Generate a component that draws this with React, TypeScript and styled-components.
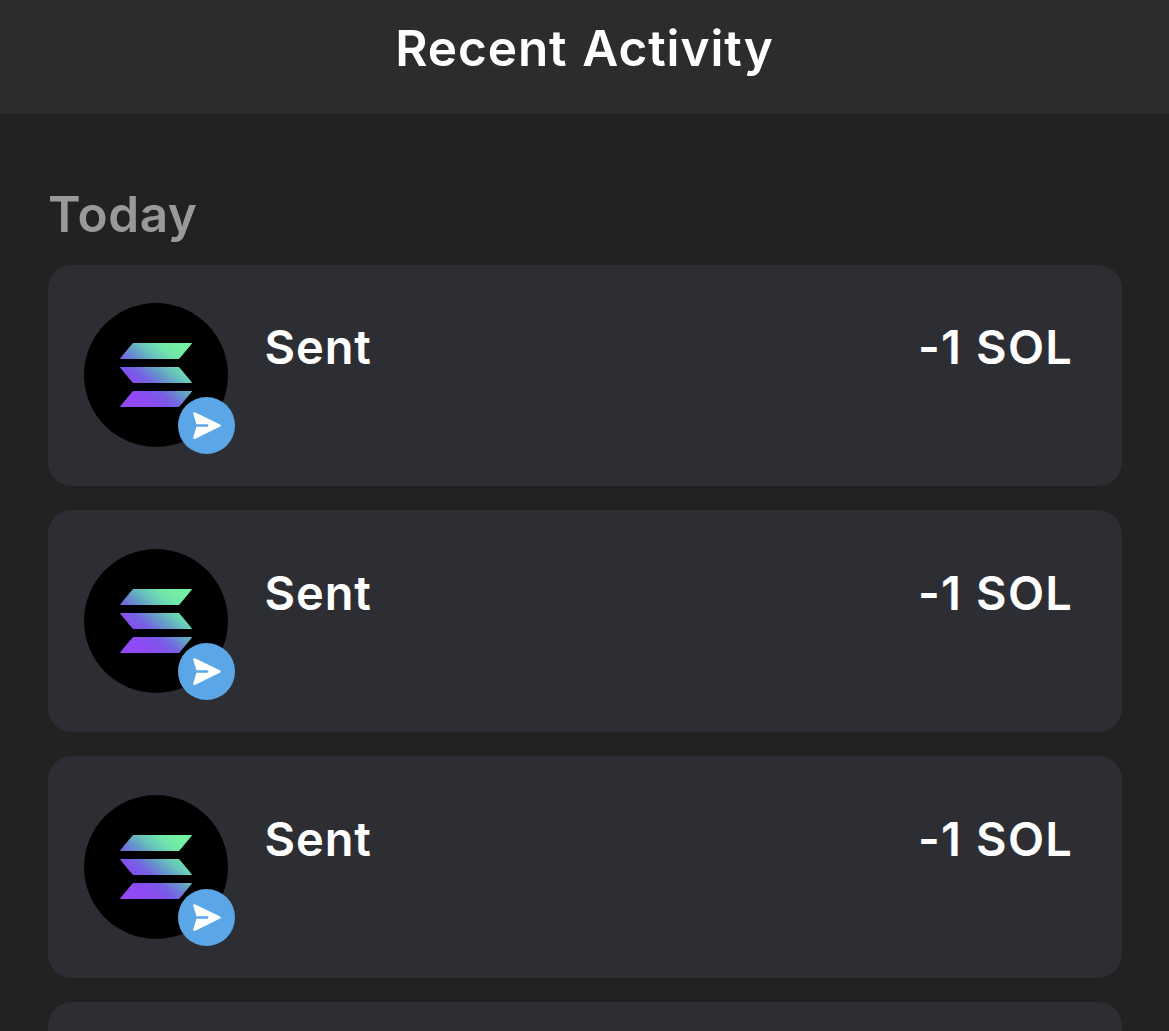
import React from 'react';
import styled, { createGlobalStyle } from 'styled-components';

const GlobalStyle = createGlobalStyle`
  body {
    margin: 0;
    background-color: #222222;
    font-family: Inter, "Liberation Sans", sans-serif;
  }
`;

const Screen = styled.div`
  display: flex;
  flex-direction: column;
  height: 1031px;
  overflow: hidden;
  background-color: #222222;
`;

const Header = styled.header`
  display: flex;
  flex-shrink: 0;
  justify-content: center;
  box-sizing: border-box;
  height: 114px;
  padding-top: 18px;
  background-color: #2c2c2c;
`;

const Title = styled.h1`
  margin: 0;
  color: white;
  font-size: 49.5px;
  font-weight: 600;
  line-height: 60px;
  letter-spacing: 0.9px;
  word-spacing: 1.5px;
  white-space: nowrap;
`;

const Content = styled.main`
  padding: 70px 47px 0 48px;
`;

const DayLabel = styled.h2`
  margin: 0 0 21px;
  color: #999999;
  font-size: 49.5px;
  font-weight: 600;
  line-height: 60px;
  letter-spacing: 0.6px;
`;

const ActivityList = styled.div`
  display: flex;
  flex-direction: column;
  gap: 24px;
`;

const Card = styled.div`
  display: flex;
  box-sizing: border-box;
  height: 222px;
  padding: 39px 49px 0 36px;
  border-radius: 24px;
  background-color: #2d2e33;

  &:first-child {
    height: 221px;
    padding-top: 38px;
  }
`;

const TokenIcon = styled.div`
  position: relative;
  display: flex;
  flex-shrink: 0;
  align-items: center;
  justify-content: center;
  width: 144px;
  height: 144px;
  border-radius: 50%;
  background-color: black;
`;

const SentBadge = styled.div`
  position: absolute;
  right: -7px;
  bottom: -7px;
  width: 57px;
  height: 57px;
  border-radius: 50%;
  background-color: #5ba6e6;

  svg {
    display: block;
  }
`;

const Details = styled.div`
  display: flex;
  flex: 1;
  justify-content: space-between;
  margin: 14px 0 0 36.5px;
`;

const Label = styled.span`
  color: white;
  font-size: 47px;
  font-weight: 600;
  line-height: 60px;
  letter-spacing: 0.9px;
`;

const Amount = styled(Label)`
  letter-spacing: 1.2px;
  word-spacing: 1px;
`;

const transactions = [
    { id: 1, type: 'Sent', amount: '-1 SOL' },
    { id: 2, type: 'Sent', amount: '-1 SOL' },
    { id: 3, type: 'Sent', amount: '-1 SOL' },
];

function SolanaLogo({ id }: { id: string }) {
    return (
        <svg width="72" height="64" viewBox="0 0 72 64">
          <defs>
            <linearGradient id={id} gradientUnits="userSpaceOnUse" x1="10" y1="62" x2="62" y2="2">
              <stop offset="0.1" stopColor="#9148f5" />
              <stop offset="0.26" stopColor="#8450ee" />
              <stop offset="0.38" stopColor="#7562e2" />
              <stop offset="0.54" stopColor="#649cc8" />
              <stop offset="0.68" stopColor="#69c8bb" />
              <stop offset="0.82" stopColor="#70e6a9" />
              <stop offset="1" stopColor="#74f2a2" />
            </linearGradient>
          </defs>
          <g fill={`url(#${id})`} stroke={`url(#${id})`} strokeWidth="1" strokeLinejoin="round">
            <path d="M13 0.5H71.5L59 15.5H0.5Z" />
            <path d="M0.5 24.5H59L71.5 39.5H13Z" />
            <path d="M13 48.5H71.5L59 63.5H0.5Z" />
          </g>
        </svg>
    );
}

function SendIcon() {
    return (
        <svg width="57" height="57" viewBox="0 0 57 57">
          <path
            d="M16.4 16.4L41.6 28.5L16.4 40.8L20 28.5Z"
            fill="white"
            stroke="white"
            strokeWidth="2.4"
            strokeLinejoin="round"
          />
          <path d="M17 28.5H29" stroke="#5ba6e6" strokeWidth="2.6" strokeLinecap="round" />
        </svg>
    );
}

function App() {
    return (
        <>
        <GlobalStyle />
        <Screen>
          <Header>
            <Title>Recent Activity</Title>
          </Header>
          <Content>
            <DayLabel>Today</DayLabel>
            <ActivityList>
              {transactions.map((item) => (
                <Card key={item.id}>
                  <TokenIcon>
                    <SolanaLogo id={`solana-${item.id}`} />
                    <SentBadge>
                      <SendIcon />
                    </SentBadge>
                  </TokenIcon>
                  <Details>
                    <Label>{item.type}</Label>
                    <Amount>{item.amount}</Amount>
                  </Details>
                </Card>
              ))}
              {/* next row, only its top edge is on screen */}
              <Card />
            </ActivityList>
          </Content>
        </Screen>
        </>
    );
}

export default App;
